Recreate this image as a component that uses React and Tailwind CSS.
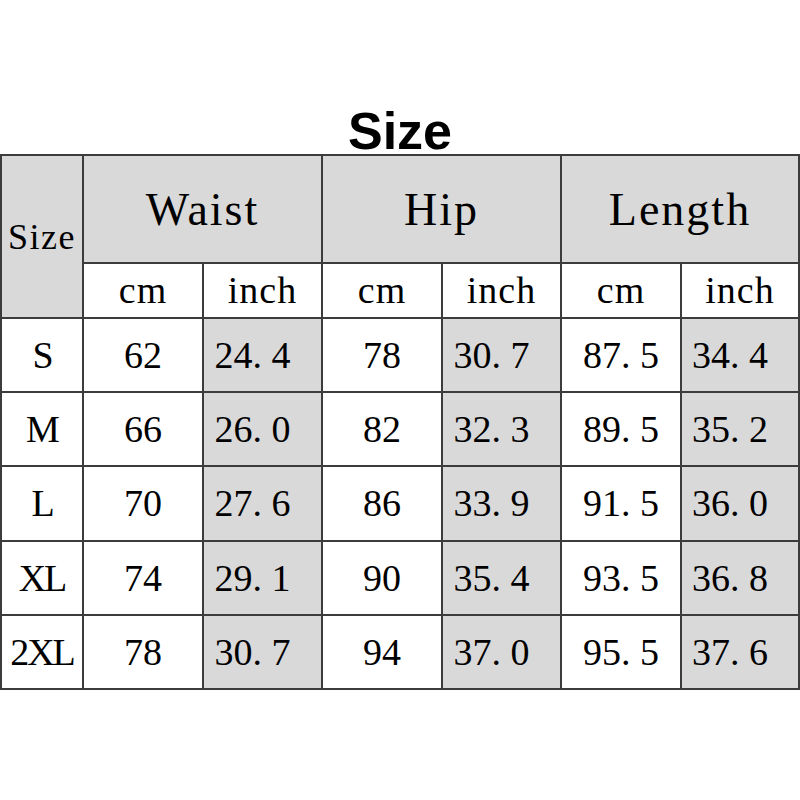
import React from "react";

const rows = [
    ["S", "62", "24. 4", "78", "30. 7", "87. 5", "34. 4"],
    ["M", "66", "26. 0", "82", "32. 3", "89. 5", "35. 2"],
    ["L", "70", "27. 6", "86", "33. 9", "91. 5", "36. 0"],
    ["XL", "74", "29. 1", "90", "35. 4", "93. 5", "36. 8"],
    ["2XL", "78", "30. 7", "94", "37. 0", "95. 5", "37. 6"],
];

const serif = "font-['Liberation_Serif','Times_New_Roman',serif]";
const line = "border-[#3c3c3c]";

const App = () => {
    return (
        <div className="w-[800px] h-[800px] bg-white text-black">
            <div className="pt-[109px] text-center font-['Liberation_Sans',Arial,sans-serif] font-bold text-[52px] leading-[45px]">
                Size
            </div>

            <div
                className={`grid grid-cols-[82px_120px_119px_120px_119px_120px_118px] grid-rows-[108px_55px_74px_74px_75px_74px_74px] border-l-2 border-t-2 ${line} ${serif}`}
            >
                <div className={`row-span-2 bg-[#d9d9d9] border-r-2 border-b-2 ${line} flex items-center justify-center text-[36px] tracking-[1.5px]`}>
                    Size
                </div>
                {["Waist", "Hip", "Length"].map((h) => (
                    <div
                        key={h}
                        className={`col-span-2 bg-[#d9d9d9] border-r-2 border-b-2 ${line} flex items-center justify-center text-[46px] tracking-[2px]`}
                    >
                        {h}
                    </div>
                ))}
                {["cm", "inch", "cm", "inch", "cm", "inch"].map((u, i) => (
                    <div
                        key={i}
                        className={`border-r-2 border-b-2 ${line} flex items-center justify-center text-[38px] tracking-[1px]`}
                    >
                        {u}
                    </div>
                ))}

                {rows.map((r) =>
                    r.map((v, i) => {
                        const inch = i === 2 || i === 4 || i === 6;
                        return (
                            <div
                                key={r[0] + i}
                                className={`border-r-2 border-b-2 ${line} flex items-center justify-center text-[38px] ${inch ? "bg-[#d9d9d9] pr-5" : "bg-white"} ${i === 0 ? "tracking-[-2px]" : ""}`}
                            >
                                {v}
                            </div>
                        );
                    })
                )}
            </div>
        </div>
    );
};

export default App;
